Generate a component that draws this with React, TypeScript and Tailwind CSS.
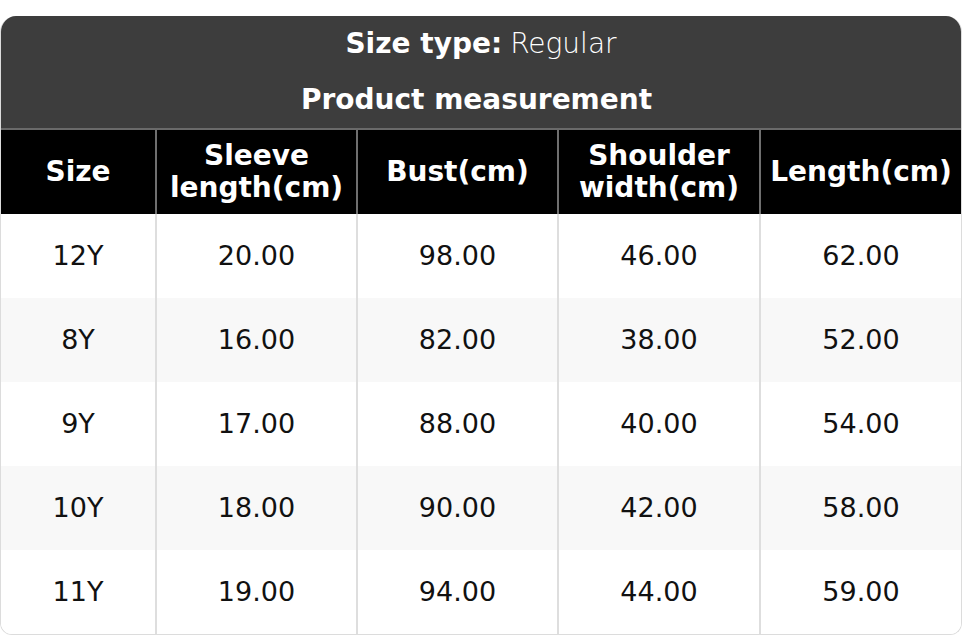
import React from "react";

const columns = ["Size", "Sleeve length(cm)", "Bust(cm)", "Shoulder width(cm)", "Length(cm)"];

const rows = [
  ["12Y", "20.00", "98.00", "46.00", "62.00"],
  ["8Y", "16.00", "82.00", "38.00", "52.00"],
  ["9Y", "17.00", "88.00", "40.00", "54.00"],
  ["10Y", "18.00", "90.00", "42.00", "58.00"],
  ["11Y", "19.00", "94.00", "44.00", "59.00"],
];

const grid = "grid grid-cols-[154px_201px_201px_202px_1fr]";

export default function App() {
  return (
    <div className="w-[962px] h-[636px] bg-white pt-4 font-['DejaVu_Sans',sans-serif]">
      <div className="rounded-t-2xl rounded-b-xl overflow-hidden border border-t-0 border-[#dcdcdc]">
        {/* Title */}
        <div className="bg-[#3d3d3d] text-white text-[28px] border-b-2 border-[#6a6a6a]">
          <div className="h-14 flex items-center justify-center">
            <span className="font-bold">Size type:</span>
            <span className="font-extralight ml-2">Regular</span>
          </div>
          <div className="h-14 flex items-center justify-center font-bold pr-[9px]">Product measurement</div>
        </div>

        {/* Column headings */}
        <div className={`${grid} bg-black text-white font-bold text-[28px] leading-8`}>
          {columns.map((c, i) => (
            <div
              key={c}
              className={`h-[84px] flex items-center justify-center text-center px-2 ${i > 0 ? "border-l-2 border-[#6f6f6f]" : ""}`}
            >
              {c}
            </div>
          ))}
        </div>

        {/* Body */}
        {rows.map((r, ri) => (
          <div key={ri} className={`${grid} text-[27px] text-[#111] ${ri % 2 === 1 ? "bg-[#f8f8f8]" : "bg-white"}`}>
            {r.map((v, i) => (
              <div
                key={i}
                className={`h-[84px] flex items-center justify-center ${i > 0 ? "border-l-2 border-[#dedede]" : ""}`}
              >
                {v}
              </div>
            ))}
          </div>
        ))}
      </div>
    </div>
  );
}
